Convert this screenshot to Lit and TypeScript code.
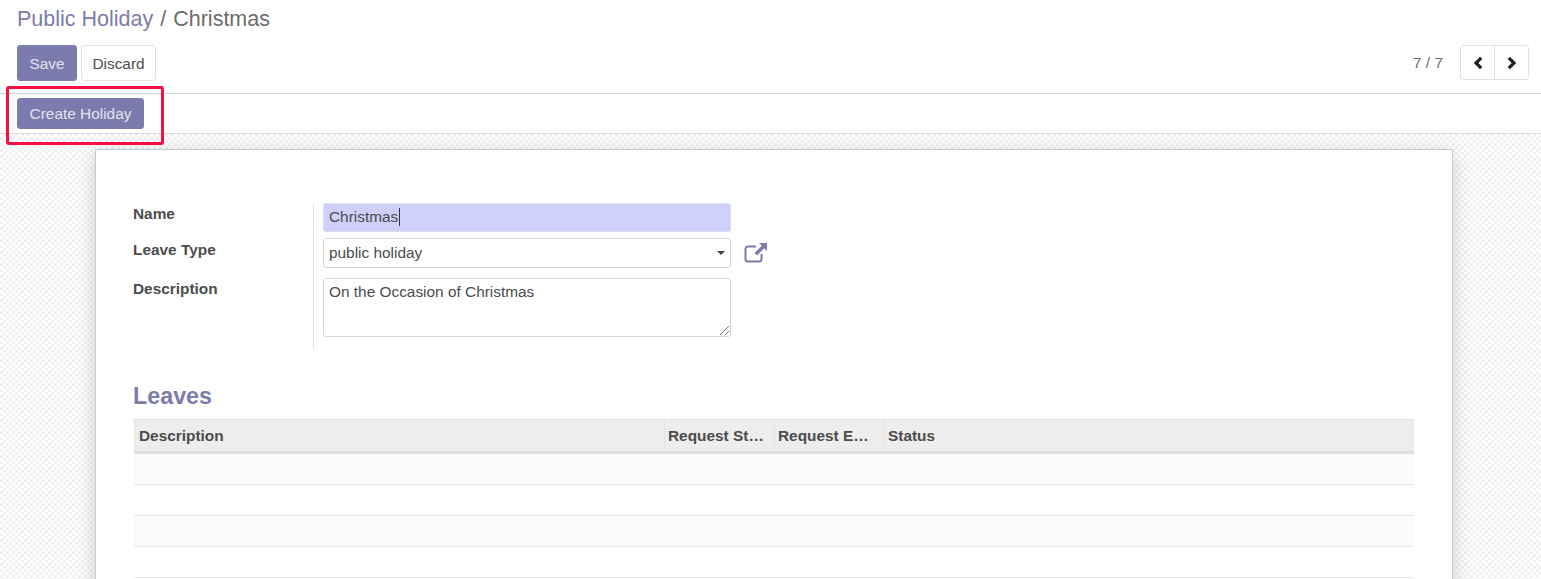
import { LitElement, html, css } from "lit";
import { customElement } from "lit/decorators.js";

@customElement("app-root")
export class AppRoot extends LitElement {
  static styles = css`
    :host { display: block; width: 1541px; height: 579px; overflow: hidden; position: relative; background: #fff;
      font-family: "Liberation Sans", Arial, sans-serif; font-size: 15.4px; color: #4c4c4c; }
    * { box-sizing: border-box; }
    .panel { height: 94px; padding: 0 12px 0 17px; border-bottom: 1px solid #d2d2d2; display: flex; flex-direction: column; }
    .crumbs { height: 45px; padding-top: 6px; font-size: 21.5px; line-height: 26px; display: flex; gap: 7px; color: #6c6c6c; }
    .crumbs .link { color: #7c7bad; }
    .actions { display: flex; justify-content: space-between; align-items: flex-start; }
    .left { display: flex; gap: 4px; }
    .btn { height: 36px; border-radius: 3px; display: flex; align-items: center; justify-content: center; font-size: 15.4px; }
    .primary { background: #7c7bad; color: #e2e2ec; border: 1px solid #7c7bad; }
    .save { width: 60px; padding-top: 1px; }
    .discard { width: 75px; background: #fff; color: #4c4c4c; border: 1px solid #e3e3e3; padding-top: 1px; }
    .right { display: flex; align-items: center; height: 35px; }
    .pager { width: 47px; font-size: 15.4px; color: #6c6c6c; }
    .nav { display: flex; height: 35px; width: 69px; border: 1px solid #e3e3e3; border-radius: 3px; }
    .nav div { flex: 1; display: flex; align-items: center; justify-content: center; }
    .nav div + div { border-left: 1px solid #e3e3e3; }
    .statusbar { height: 40px; padding: 4px 17px 0; border-bottom: 1px solid #d9d9df; }
    .create { width: 127px; height: 31px; }
    .content { height: 445px; padding: 15px 88px 0 95px;
      background-color: #fafafa;
      background-image: conic-gradient(#f1f1f1 25%, #fff 0 50%, #f1f1f1 0 75%, #fff 0);
      background-size: 6px 6px; }
    .sheet { height: 500px; background: #fff; border: 1px solid #c8c8d0; box-shadow: 0 5px 20px -1px rgba(0,0,0,.2);
      padding: 53px 37px 0 37px; }
    .group { display: flex; height: 147px; }
    .labels { width: 181px; border-right: 1px solid #e3e3e3; display: grid; grid-template-rows: 36px 39px 1fr; font-weight: 700; font-size: 15.4px; color: #4c4c4c; }
    .labels div { padding-top: 2px; line-height: 18px; }
    .fields { padding-left: 9px; display: flex; flex-direction: column; width: 500px; }
    .field { width: 408px; border: 1px solid #d6d6d6; border-radius: 3px; padding-left: 5px; display: flex; align-items: center; font-size: 15.4px; color: #4c4c4c; background: #fff; }
    .name { height: 29px; background: #cfcffb; border-color: #dcdce8; padding-bottom: 1px; }
    .caret { width: 1px; height: 18px; background: #333; margin-left: 1px; }
    .row { display: flex; align-items: center; margin-top: 6px; }
    .type { height: 30px; justify-content: space-between; padding-right: 5px; }
    .arrow { width: 0; height: 0; border: 4px solid transparent; border-top-color: #444; border-bottom: 0; }
    .ext { margin-left: 13px; margin-bottom: 2px; display: flex; }
    .desc { height: 59px; margin-top: 10px; align-items: flex-start; padding-top: 4px; line-height: 17px; position: relative; }
    .grip { position: absolute; right: 0; bottom: 0; }
    h2 { margin: 0; height: 36px; padding-top: 33px; box-sizing: content-box; font-size: 23.3px; line-height: 26px; color: #7c7bad; font-weight: 700; }
    .table { width: 1280px; margin-left: 1px; }
    .thead { display: grid; grid-template-columns: 529px 110px 110px 530px; height: 35px; background: #ededed; border-top: 1px solid #e3e3e3; border-bottom: 3px solid #dfe0e6; border-left: 1px solid #e3e3e3; }
    .thead div { padding: 0 0 0 3px; font-weight: 700; font-size: 15.4px; line-height: 31px; color: #4c4c4c; white-space: nowrap; border-left: 1px solid #e3e3e3; }
    .thead div:first-child { border-left: 0; padding-left: 4px; }
    .tr { height: 31px; border-bottom: 1px solid #e6e6ea; background: #fff; }
    .tr.odd { background: #fbfbfb; height: 31px; }
    .highlight { position: absolute; left: 6px; top: 86px; width: 158px; height: 59px; border: 3px solid #f50d43; border-radius: 3px; }
  `;

  render() {
    return html`
      <div class="panel">
        <div class="crumbs"><span class="link">Public Holiday</span><span>/</span><span>Christmas</span></div>
        <div class="actions">
          <div class="left">
            <div class="btn primary save">Save</div>
            <div class="btn discard">Discard</div>
          </div>
          <div class="right">
            <span class="pager">7 / 7</span>
            <div class="nav">
              <div><svg width="10" height="14" viewBox="0 0 10 14"><path d="M8.200 1.800 3 7l5.200 5.200" fill="none" stroke="#222" stroke-width="3.200"/></svg></div>
              <div><svg width="10" height="14" viewBox="0 0 10 14"><path d="M1.800 1.800 7 7l-5.200 5.200" fill="none" stroke="#222" stroke-width="3.200"/></svg></div>
            </div>
          </div>
        </div>
      </div>
      <div class="statusbar"><div class="btn primary create">Create Holiday</div></div>
      <div class="content">
        <div class="sheet">
          <div class="group">
            <div class="labels"><div>Name</div><div>Leave Type</div><div>Description</div></div>
            <div class="fields">
              <div class="field name">Christmas<span class="caret"></span></div>
              <div class="row">
                <div class="field type">public holiday<span class="arrow"></span></div>
                <span class="ext"><svg width="24" height="21" viewBox="0 0 24 21"><path d="M12 4.500H4A2.500 2.500 0 0 0 1.500 7v10A2.500 2.500 0 0 0 4 19.500h11a2.500 2.500 0 0 0 2.500-2.500v-5" fill="none" stroke="#7c7bad" stroke-width="2"/><path d="M15 1h8v8l-2.800-2.800-7.200 7.200-2.400-2.400 7.200-7.200z" fill="#7c7bad"/></svg></span>
              </div>
              <div class="field desc">On the Occasion of Christmas
                <svg class="grip" width="12" height="12" viewBox="0 0 12 12"><path d="M11 2 2 11M11 7l-4 4" stroke="#777" stroke-width="1" fill="none"/></svg>
              </div>
            </div>
          </div>
          <h2>Leaves</h2>
          <div class="table">
            <div class="thead"><div>Description</div><div>Request St…</div><div>Request E…</div><div>Status</div></div>
            <div class="tr odd"></div>
            <div class="tr"></div>
            <div class="tr odd"></div>
            <div class="tr"></div>
          </div>
        </div>
      </div>
      <div class="highlight"></div>
    `;
  }
}
